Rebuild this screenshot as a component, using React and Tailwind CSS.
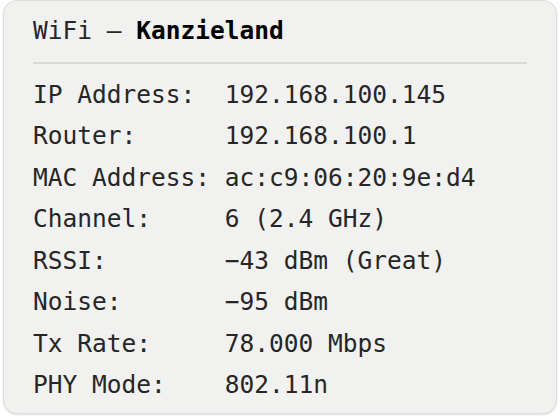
const ROWS = [
  ["IP Address:", "192.168.100.145"],
  ["Router:", "192.168.100.1"],
  ["MAC Address:", "ac:c9:06:20:9e:d4"],
  ["Channel:", "6 (2.4 GHz)"],
  ["RSSI:", "\u221243 dBm (Great)"],
  ["Noise:", "\u221295 dBm"],
  ["Tx Rate:", "78.000 Mbps"],
  ["PHY Mode:", "802.11n"],
];

export default function App() {
  return (
    <div className="w-[560px] h-[418px] bg-white px-[3px] pb-[4px] overflow-hidden">
      <div
        className="h-[414px] rounded-[14px] bg-[#f1f1f0] border border-[#dcdcdc] shadow-[0_1px_2px_rgba(0,0,0,0.12)] pl-[29px] pr-[29px] pt-[9px] text-[#262626] text-[24.5px] leading-[41.5px]"
        style={{ fontFamily: '"DejaVu Sans Mono", "Liberation Mono", monospace' }}
      >
        <div className="whitespace-pre">
          WiFi — <span className="font-bold text-black">Kanzieland</span>
        </div>
        <div className="mt-[10px] h-[2px] bg-[#dadad8]" />
        <div className="mt-[10px]">
          {ROWS.map(([label, value]) => (
            <div key={label} className="flex whitespace-pre">
              <span className="w-[13ch] shrink-0">{label}</span>
              <span>{value}</span>
            </div>
          ))}
        </div>
      </div>
    </div>
  );
}
